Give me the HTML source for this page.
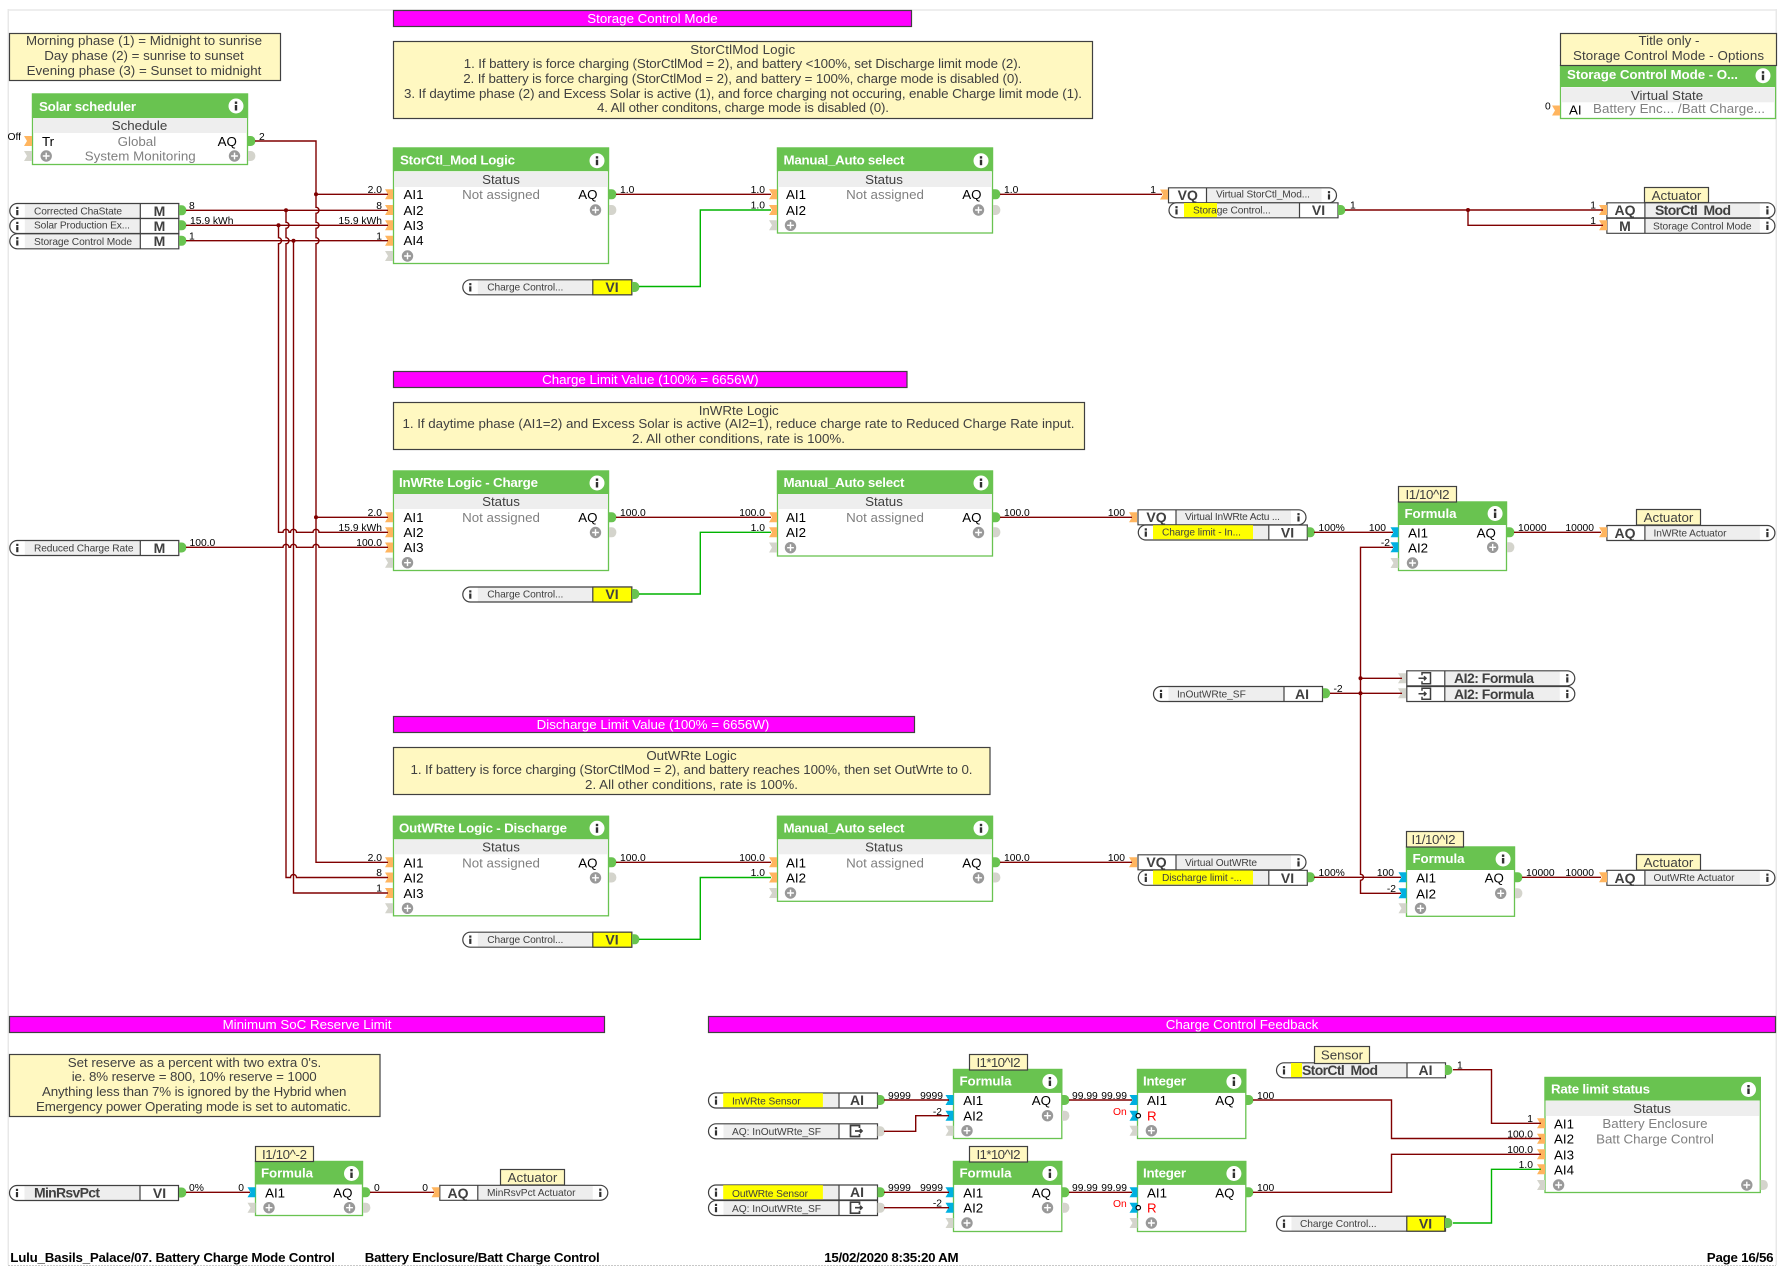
<!DOCTYPE html>
<html><head><meta charset="utf-8"><title>Battery Charge Mode Control</title>
<style>
html,body{margin:0;padding:0;background:#fff;width:1791px;height:1283px;overflow:hidden}
svg{display:block}
text{font-family:"Liberation Sans",Arial,sans-serif;white-space:pre}
.n{font-size:13.33px;fill:#404040;text-anchor:middle}
.mg{font-size:13.33px;fill:#fff;text-anchor:middle}
.h{font-size:13.33px;font-weight:bold;fill:#fff}
.t{font-size:13.33px;fill:#000}
.tr{font-size:13.33px;fill:#000;text-anchor:end}
.s{font-size:13.33px;fill:#808080;text-anchor:middle}
.st{font-size:13.33px;fill:#404040;text-anchor:middle}
.l{font-size:10.3px;fill:#000}
.lr{font-size:10.3px;fill:#000;text-anchor:end}
.m{font-size:10.2px;fill:#404040}
.b{font-size:14px;font-weight:bold;fill:#404040;text-anchor:middle}
.bl{font-size:14px;font-weight:bold;fill:#404040}
.f{font-size:13.33px;font-weight:bold;fill:#000}
.note{fill:#fff8c1;stroke:#404040;stroke-width:1.2}
.mag{fill:#f0f;stroke:#404040;stroke-width:1.2}
.box{fill:#fff;stroke:#69c350;stroke-width:1.3}
.hd{fill:#69c350}
.gr{fill:#eee}
.w{fill:none;stroke:#800000;stroke-width:1.4}
.wg{fill:none;stroke:#00b400;stroke-width:1.4}
.bd{fill:none;stroke:#404040;stroke-width:1.2}
.y{fill:#ff0}
.yb{fill:#ff0;stroke:#404040;stroke-width:1.2}
</style></head><body>
<svg xmlns="http://www.w3.org/2000/svg" width="1791" height="1283" viewBox="0 0 1791 1283">
<defs>
<g id="i"><rect x="-1.1" y="-4.2" width="2.2" height="2.2" fill="#303030"/><rect x="-1.1" y="-1" width="2.2" height="5.2" fill="#303030"/></g>
<g id="I"><circle r="7.5" fill="#fff"/><rect x="-1.2" y="-4.5" width="2.4" height="2.4" fill="#303030"/><rect x="-1.2" y="-1" width="2.4" height="5.5" fill="#303030"/></g>
<g id="P"><circle r="5.7" fill="#999"/><path d="M-3.4,0H3.4M0,-3.4V3.4" stroke="#fff" stroke-width="1.4"/></g>
<path id="pI" d="M-8,-5H0V5H-8L-5,0Z" fill="#ffb55f"/>
<path id="pB" d="M-8,-5H0V5H-8L-5,0Z" fill="#00b0e0"/>
<path id="pG" d="M-8,-5H0V5H-8L-5,0Z" fill="#d4d4cc"/>
<path id="pO" d="M0,-5H3A4.4,5 0 0 1 3,5H0Z" fill="#69c350"/>
<path id="pX" d="M0,-5H3A4.4,5 0 0 1 3,5H0Z" fill="#d4d4cc"/>
<g id="L"><path d="M8,.5H169.5V15.5H8A7.5,7.5 0 0 1 8,.5Z" fill="#fff"/><rect x="15.5" y="1" width="115.5" height="14" fill="#eee"/><path d="M8,.5H169.5V15.5H8A7.5,7.5 0 0 1 8,.5ZM131,.5V15.5" class="bd"/><use href="#i" x="8" y="8"/></g>
<g id="R"><path d="M.5,.5H161A7.5,7.5 0 0 1 161,15.5H.5Z" fill="#fff"/><rect x="39" y="1" width="114.5" height="14" fill="#eee"/><path d="M.5,.5H161A7.5,7.5 0 0 1 161,15.5H.5ZM38.5,.5V15.5" class="bd"/><use href="#i" x="161" y="8"/></g>
<path id="ao" d="M3.5,-3V-5.5H-5.5V5.5H3.5V3M-1,0H6M4,-2L6,0L4,2" fill="none" stroke="#404040" stroke-width="1.7"/>
<path id="ai" d="M-3,-3V-5.5H5.5V5.5H-3V3M-6.5,0H1M-1,-2L1,0L-1,2" fill="none" stroke="#404040" stroke-width="1.5"/>
</defs>

<!-- page frame -->
<rect x="8" y="9" width="1768" height="2" fill="#eee"/>
<rect x="7.5" y="9" width="1.5" height="1256" fill="#e8e8e8"/>
<rect x="1775.5" y="9" width="1.5" height="1256" fill="#e8e8e8"/>
<path d="M8,1265.5H1776" stroke="#c8c8c8" stroke-dasharray="2 1" fill="none"/>

<!-- section titles -->
<rect class="mag" x="393.5" y="10.5" width="518" height="16"/><text class="mg" x="652.5" y="23">Storage Control Mode</text>
<rect class="mag" x="393.5" y="371.5" width="513.5" height="16"/><text class="mg" x="650.3" y="384">Charge Limit Value (100% = 6656W)</text>
<rect class="mag" x="393.5" y="716.5" width="521" height="16"/><text class="mg" x="653" y="729">Discharge Limit Value (100% = 6656W)</text>
<rect class="mag" x="9.5" y="1016.5" width="595" height="16"/><text class="mg" x="307" y="1029">Minimum SoC Reserve Limit</text>
<rect class="mag" x="708.5" y="1016.5" width="1067" height="16"/><text class="mg" x="1242" y="1029">Charge Control Feedback</text>

<!-- notes -->
<rect class="note" x="9.5" y="33.5" width="271" height="47"/>
<text class="n" x="144" y="45" textLength="236">Morning phase (1) = Midnight to sunrise</text>
<text class="n" x="144" y="60" textLength="199.5">Day phase (2) = sunrise to sunset</text>
<text class="n" x="144" y="75" textLength="234.7">Evening phase (3) = Sunset to midnight</text>

<rect class="note" x="393.5" y="41.5" width="699" height="77"/>
<text class="n" x="742.7" y="54" textLength="105">StorCtlMod Logic</text>
<text class="n" x="742.5" y="68" textLength="557.5">1. If battery is force charging (StorCtlMod = 2), and battery &lt;100%, set Discharge limit mode (2).</text>
<text class="n" x="742.7" y="83" textLength="559">2. If battery is force charging (StorCtlMod = 2), and battery = 100%, charge mode is disabled (0).</text>
<text class="n" x="743" y="98" textLength="678">3. If daytime phase (2) and Excess Solar is active (1), and force charging not occuring, enable Charge limit mode (1).</text>
<text class="n" x="743" y="112" textLength="292">4. All other conditons, charge mode is disabled (0).</text>

<rect class="note" x="393.5" y="402.5" width="691" height="47"/>
<text class="n" x="738.7" y="415">InWRte Logic</text>
<text class="n" x="738.5" y="428" textLength="672">1. If daytime phase (AI1=2) and Excess Solar is active (AI2=1), reduce charge rate to Reduced Charge Rate input.</text>
<text class="n" x="738.5" y="443" textLength="213">2. All other conditions, rate is 100%.</text>

<rect class="note" x="393.5" y="747.5" width="596.5" height="47"/>
<text class="n" x="691.5" y="760">OutWRte Logic</text>
<text class="n" x="691.5" y="774" textLength="562">1. If battery is force charging (StorCtlMod = 2), and battery reaches 100%, then set OutWrte to 0.</text>
<text class="n" x="691.5" y="789" textLength="213">2. All other conditions, rate is 100%.</text>

<rect class="note" x="9.5" y="1054.5" width="370.5" height="62"/>
<text class="n" x="194.5" y="1067" textLength="253.5">Set reserve as a percent with two extra 0's.</text>
<text class="n" x="194.2" y="1081" textLength="245">ie. 8% reserve = 800, 10% reserve = 1000</text>
<text class="n" x="194.2" y="1096" textLength="304.5">Anything less than 7% is ignored by the Hybrid when</text>
<text class="n" x="193.5" y="1111" textLength="315">Emergency power Operating mode is set to automatic.</text>

<!-- top-right virtual state -->
<rect class="box" x="1560.5" y="65.5" width="215" height="53"/>
<rect class="hd" x="1560" y="65" width="216" height="22"/>
<rect class="gr" x="1561" y="87.3" width="214" height="15"/>
<rect class="note" x="1560.5" y="33.5" width="216" height="32"/>
<text class="n" x="1669" y="45">Title only -</text>
<text class="n" x="1668.5" y="60" textLength="191">Storage Control Mode - Options</text>
<text class="h" x="1567" y="79" textLength="171">Storage Control Mode - O...</text>
<use href="#I" x="1763" y="75.7"/>
<text class="st" x="1667" y="100">Virtual State</text>
<text class="t" x="1569" y="114.5">AI</text>
<text class="s" x="1679" y="113" textLength="172">Battery Enc... /Batt Charge...</text>
<use href="#pI" x="1560" y="110.5"/>
<text class="l" x="1545" y="109.5">0</text>

<!-- Solar scheduler -->
<g transform="translate(32.5,94)">
<rect class="box" width="215" height="70.5"/><rect class="hd" x="-.6" y="-.6" width="216.2" height="24.6"/><rect class="gr" x=".6" y="24" width="213.8" height="15"/>
<text class="h" x="6.5" y="17" textLength="97">Solar scheduler</text><use href="#I" x="203.5" y="12"/>
<text class="st" x="107" y="36">Schedule</text>
<text class="t" x="9.5" y="52">Tr</text><text class="s" x="104.4" y="52">Global</text><text class="tr" x="204.4" y="52">AQ</text>
<text class="s" x="107.7" y="66.7" textLength="111">System Monitoring</text><use href="#P" x="13.7" y="62"/><use href="#P" x="202" y="62"/>
</g>
<use href="#pI" x="32" y="141"/><use href="#pG" x="32" y="156"/><use href="#pO" x="248" y="141"/><use href="#pX" x="248" y="156"/>
<text class="l" x="7.5" y="140">Off</text><text class="l" x="259" y="140">2</text>

<!-- Left sensors -->
<use href="#L" x="9.3" y="203"/><text class="m" x="34" y="214.5" textLength="88">Corrected ChaState</text><text class="b" x="159.5" y="216">M</text>
<use href="#L" x="9.3" y="218"/><text class="m" x="34" y="228.5" textLength="96">Solar Production Ex...</text><text class="b" x="159.5" y="231">M</text>
<use href="#L" x="9.3" y="233.3"/><text class="m" x="34" y="245" textLength="98">Storage Control Mode</text><text class="b" x="159.5" y="246">M</text>
<use href="#pO" x="179" y="210.3"/><use href="#pO" x="179" y="225.3"/><use href="#pO" x="179" y="240.7"/>

<use href="#L" x="9.3" y="540"/><text class="m" x="34" y="551.5" textLength="99.5">Reduced Charge Rate</text><text class="b" x="159.5" y="553">M</text>
<use href="#pO" x="179" y="547.5"/>

<!-- StorCtl_Mod Logic -->
<g transform="translate(393.5,148)">
<rect class="box" width="215" height="115.5"/><rect class="hd" x="-.6" y="-.6" width="216.2" height="23.8"/><rect class="gr" x=".6" y="24" width="213.8" height="15"/>
<text class="h" x="6.5" y="16.7" textLength="115">StorCtl_Mod Logic</text><use href="#I" x="203.5" y="12.7"/>
<text class="st" x="107.5" y="36">Status</text>
<text class="t" x="10" y="51">AI1</text><text class="s" x="107.5" y="51">Not assigned</text><text class="tr" x="204" y="51">AQ</text>
<text class="t" x="10" y="67">AI2</text><text class="t" x="10" y="82">AI3</text><text class="t" x="10" y="97">AI4</text>
<use href="#P" x="202" y="62"/><use href="#P" x="14" y="108"/>
</g>
<use href="#pI" x="393" y="194.3"/><use href="#pI" x="393" y="210"/><use href="#pI" x="393" y="225.3"/><use href="#pI" x="393" y="240.7"/><use href="#pG" x="393" y="256"/>
<use href="#pO" x="609" y="194.3"/><use href="#pX" x="609" y="210"/>

<use href="#L" x="462.3" y="279.3"/><rect class="yb" x="592.8" y="279.8" width="39" height="15"/><text class="m" x="487.3" y="290.5" textLength="76">Charge Control...</text><text class="b" x="612" y="292">VI</text>
<use href="#pO" x="632" y="287"/>

<!-- Manual_Auto 1 -->
<g transform="translate(777.5,148)">
<rect class="box" width="215" height="85"/><rect class="hd" x="-.6" y="-.6" width="216.2" height="23.8"/><rect class="gr" x=".6" y="24" width="213.8" height="15"/>
<text class="h" x="6" y="16.7" textLength="121">Manual_Auto select</text><use href="#I" x="203.5" y="12.7"/>
<text class="st" x="106.5" y="36">Status</text>
<text class="t" x="8.5" y="51">AI1</text><text class="s" x="107.5" y="51">Not assigned</text><text class="tr" x="204" y="51">AQ</text>
<text class="t" x="8.5" y="67">AI2</text><use href="#P" x="201" y="62"/><use href="#P" x="13" y="77.3"/>
</g>
<use href="#pI" x="777" y="194.3"/><use href="#pI" x="777" y="210"/><use href="#pG" x="777" y="225.3"/><use href="#pO" x="993" y="194.3"/><use href="#pX" x="993" y="210"/>

<!-- VQ/VI 1 -->
<use href="#R" x="1168" y="187.3"/><text class="m" x="1216" y="197.5" textLength="94">Virtual StorCtl_Mod...</text><text class="b" x="1187.8" y="200">VQ</text>
<use href="#pI" x="1168" y="194.5"/>
<use href="#L" x="1168.5" y="202.3"/><rect class="y" x="1184" y="203" width="33" height="14"/><text class="m" x="1193" y="213.5" textLength="77.7">Storage Control...</text><text class="b" x="1318.5" y="215">VI</text>
<use href="#pO" x="1338" y="210"/>

<!-- Actuator 1 -->
<use href="#R" x="1606.4" y="202.3"/><text class="bl" x="1655" y="215" textLength="76">StorCtl  Mod</text><text class="b" x="1625" y="215">AQ</text>
<use href="#R" x="1606.4" y="217.8"/><text class="m" x="1653" y="229.5" textLength="98.5">Storage Control Mode</text><text class="b" x="1625" y="231">M</text>
<rect class="note" x="1644.5" y="187.5" width="64" height="15"/><text class="n" x="1676.5" y="200">Actuator</text>
<use href="#pI" x="1607" y="210"/><use href="#pI" x="1607" y="225.3"/>

<!-- InWRte Logic -->
<g transform="translate(393.5,471)">
<rect class="box" width="215" height="99.5"/><rect class="hd" x="-.6" y="-.6" width="216.2" height="23.6"/><rect class="gr" x=".6" y="23" width="213.8" height="15"/>
<text class="h" x="5.5" y="16" textLength="139">InWRte Logic - Charge</text><use href="#I" x="203.5" y="12"/>
<text class="st" x="107.5" y="35">Status</text>
<text class="t" x="10" y="51">AI1</text><text class="s" x="107.5" y="51">Not assigned</text><text class="tr" x="204" y="51">AQ</text>
<text class="t" x="10" y="66">AI2</text><text class="t" x="10" y="81">AI3</text>
<use href="#P" x="202" y="61.5"/><use href="#P" x="14" y="91.7"/>
</g>
<use href="#pI" x="393" y="517.3"/><use href="#pI" x="393" y="532.3"/><use href="#pI" x="393" y="547.5"/><use href="#pG" x="393" y="562.7"/>
<use href="#pO" x="609" y="517.3"/><use href="#pX" x="609" y="532.3"/>

<use href="#L" x="462.3" y="586.5"/><rect class="yb" x="592.8" y="587" width="39" height="15"/><text class="m" x="487.3" y="597.5" textLength="76">Charge Control...</text><text class="b" x="612" y="599">VI</text>
<use href="#pO" x="632" y="594"/>

<!-- Manual_Auto 2 -->
<g transform="translate(777.5,471)">
<rect class="box" width="215" height="85"/><rect class="hd" x="-.6" y="-.6" width="216.2" height="23.6"/><rect class="gr" x=".6" y="23" width="213.8" height="15"/>
<text class="h" x="6" y="16" textLength="121">Manual_Auto select</text><use href="#I" x="203.5" y="12"/>
<text class="st" x="106.5" y="35">Status</text>
<text class="t" x="8.5" y="51">AI1</text><text class="s" x="107.5" y="51">Not assigned</text><text class="tr" x="204" y="51">AQ</text>
<text class="t" x="8.5" y="66">AI2</text><use href="#P" x="201" y="61.5"/><use href="#P" x="13" y="76.7"/>
</g>
<use href="#pI" x="777" y="517.3"/><use href="#pI" x="777" y="532.3"/><use href="#pG" x="777" y="547.5"/><use href="#pO" x="993" y="517.3"/><use href="#pX" x="993" y="532.3"/>

<!-- VQ/VI 2 -->
<use href="#R" x="1137.5" y="509.3"/><text class="m" x="1185" y="520" textLength="95">Virtual InWRte Actu ...</text><text class="b" x="1156.5" y="522">VQ</text>
<use href="#pI" x="1137" y="517.3"/>
<use href="#L" x="1137.8" y="524.5"/><rect class="y" x="1153" y="525.2" width="100" height="14"/><text class="m" x="1162" y="535.5" textLength="79">Charge limit - In...</text><text class="b" x="1287.5" y="537.5">VI</text>
<use href="#pO" x="1307.5" y="532.3"/>

<!-- Formula 1 -->
<g transform="translate(1398.5,502)">
<rect class="box" width="108" height="68.5"/><rect class="hd" x="-.6" y="-.6" width="109.2" height="23.6"/>
<text class="h" x="6" y="16" textLength="52">Formula</text><use href="#I" x="96.6" y="11.5"/>
<text class="t" x="9.6" y="35.3">AI1</text><text class="tr" x="97.4" y="35.3">AQ</text><text class="t" x="9.6" y="50.3">AI2</text>
<use href="#P" x="94.2" y="45.3"/><use href="#P" x="14" y="61"/>
</g>
<rect class="note" x="1398.5" y="486.5" width="58" height="15.5"/><text class="n" x="1427.5" y="499" textLength="44">I1/10^I2</text>
<use href="#pB" x="1398.5" y="532.3"/><use href="#pB" x="1398.5" y="547.3"/><use href="#pG" x="1398.5" y="563"/><use href="#pO" x="1507" y="532.3"/><use href="#pX" x="1507" y="547.3"/>

<!-- Actuator 2 -->
<use href="#R" x="1606.4" y="525"/><text class="m" x="1653.5" y="536.5" textLength="73">InWRte Actuator</text><text class="b" x="1625" y="538">AQ</text>
<rect class="note" x="1636.5" y="509.5" width="64" height="15.5"/><text class="n" x="1668.5" y="522">Actuator</text>
<use href="#pI" x="1607" y="532.3"/>

<!-- AI2 refs & SF -->
<use href="#R" x="1406.3" y="670.3"/><text class="bl" x="1454" y="683" textLength="80">AI2: Formula</text><use href="#ai" x="1425" y="678.3"/>
<use href="#R" x="1406.3" y="686"/><text class="bl" x="1454" y="699" textLength="80">AI2: Formula</text><use href="#ai" x="1425" y="693.8"/>
<use href="#pG" x="1406" y="678.3"/><use href="#pG" x="1406" y="693.3"/>
<use href="#L" x="1153" y="686"/><text class="m" x="1177" y="697.5" textLength="68.8">InOutWRte_SF</text><text class="b" x="1302" y="699">AI</text>
<use href="#pO" x="1322.8" y="693.3"/>

<!-- OutWRte Logic -->
<g transform="translate(393.5,816.3)">
<rect class="box" width="215" height="99.5"/><rect class="hd" x="-.6" y="-.6" width="216.2" height="23.6"/><rect class="gr" x=".6" y="23" width="213.8" height="15"/>
<text class="h" x="5.5" y="16" textLength="168">OutWRte Logic - Discharge</text><use href="#I" x="203.5" y="12"/>
<text class="st" x="107.5" y="35">Status</text>
<text class="t" x="10" y="51">AI1</text><text class="s" x="107.5" y="51">Not assigned</text><text class="tr" x="204" y="51">AQ</text>
<text class="t" x="10" y="66">AI2</text><text class="t" x="10" y="81.5">AI3</text>
<use href="#P" x="202" y="61.5"/><use href="#P" x="14" y="92"/>
</g>
<use href="#pI" x="393" y="862.3"/><use href="#pI" x="393" y="877.5"/><use href="#pI" x="393" y="893"/><use href="#pG" x="393" y="908.3"/>
<use href="#pO" x="609" y="862.3"/><use href="#pX" x="609" y="877.5"/>

<use href="#L" x="462.3" y="931.7"/><rect class="yb" x="592.8" y="932.2" width="39" height="15"/><text class="m" x="487.3" y="943" textLength="76">Charge Control...</text><text class="b" x="612" y="944.5">VI</text>
<use href="#pO" x="632" y="939.3"/>

<!-- Manual_Auto 3 -->
<g transform="translate(777.5,816.3)">
<rect class="box" width="215" height="85"/><rect class="hd" x="-.6" y="-.6" width="216.2" height="23.6"/><rect class="gr" x=".6" y="23" width="213.8" height="15"/>
<text class="h" x="6" y="16" textLength="121">Manual_Auto select</text><use href="#I" x="203.5" y="12"/>
<text class="st" x="106.5" y="35">Status</text>
<text class="t" x="8.5" y="51">AI1</text><text class="s" x="107.5" y="51">Not assigned</text><text class="tr" x="204" y="51">AQ</text>
<text class="t" x="8.5" y="66">AI2</text><use href="#P" x="201" y="61.5"/><use href="#P" x="13" y="76.7"/>
</g>
<use href="#pI" x="777" y="862.3"/><use href="#pI" x="777" y="877.5"/><use href="#pG" x="777" y="893"/><use href="#pO" x="993" y="862.3"/><use href="#pX" x="993" y="877.5"/>

<!-- VQ/VI 3 -->
<use href="#R" x="1137.5" y="854.3"/><text class="m" x="1185" y="866" textLength="72">Virtual OutWRte</text><text class="b" x="1156.5" y="867">VQ</text>
<use href="#pI" x="1137" y="862.3"/>
<use href="#L" x="1137.8" y="869.8"/><rect class="y" x="1153" y="870.5" width="100" height="14"/><text class="m" x="1162" y="881" textLength="80">Discharge limit -...</text><text class="b" x="1287.5" y="883">VI</text>
<use href="#pO" x="1307.5" y="877.3"/>

<!-- Formula 2 -->
<g transform="translate(1406.5,847)">
<rect class="box" width="108" height="69.3"/><rect class="hd" x="-.6" y="-.6" width="109.2" height="23.6"/>
<text class="h" x="6" y="16" textLength="52">Formula</text><use href="#I" x="96.6" y="12"/>
<text class="t" x="9.6" y="35.3">AI1</text><text class="tr" x="97.4" y="35.3">AQ</text><text class="t" x="9.6" y="51.3">AI2</text>
<use href="#P" x="94.2" y="46.3"/><use href="#P" x="14" y="61.3"/>
</g>
<rect class="note" x="1406.5" y="831.5" width="57" height="15.5"/><text class="n" x="1433.5" y="844" textLength="44">I1/10^I2</text>
<use href="#pB" x="1406.5" y="877.3"/><use href="#pB" x="1406.5" y="893.3"/><use href="#pG" x="1406.5" y="908.3"/><use href="#pO" x="1515" y="877.3"/><use href="#pX" x="1515" y="893.3"/>

<!-- Actuator 3 -->
<use href="#R" x="1606.4" y="869.8"/><text class="m" x="1653.5" y="881" textLength="81">OutWRte Actuator</text><text class="b" x="1625" y="883">AQ</text>
<rect class="note" x="1636.5" y="854.5" width="64" height="15.5"/><text class="n" x="1668.5" y="867">Actuator</text>
<use href="#pI" x="1607" y="877.3"/>

<!-- Min reserve -->
<use href="#L" x="9" y="1185"/><text class="bl" x="34" y="1197.5" textLength="66">MinRsvPct</text><text class="b" x="159.5" y="1198">VI</text>
<use href="#pO" x="179" y="1192.5"/>
<g transform="translate(255.5,1161.5)">
<rect class="box" width="107" height="54"/><rect class="hd" x="-.6" y="-.6" width="108.2" height="23.6"/>
<text class="h" x="5.5" y="16" textLength="52">Formula</text><use href="#I" x="96" y="12"/>
<text class="t" x="9.6" y="35.8">AI1</text><text class="tr" x="97" y="35.8">AQ</text>
<use href="#P" x="13.5" y="46.2"/><use href="#P" x="94" y="46.2"/>
</g>
<rect class="note" x="255.5" y="1146.5" width="58" height="15"/><text class="n" x="284.5" y="1159" textLength="45">I1/10^-2</text>
<use href="#pB" x="255.5" y="1192.3"/><use href="#pG" x="255.5" y="1207.7"/><use href="#pO" x="363" y="1192.3"/><use href="#pX" x="363" y="1207.7"/>
<use href="#R" x="439.3" y="1184.8"/><text class="m" x="487" y="1196" textLength="88.5">MinRsvPct Actuator</text><text class="b" x="458" y="1198">AQ</text>
<rect class="note" x="500.5" y="1169.5" width="64" height="15.5"/><text class="n" x="532.5" y="1182">Actuator</text>
<use href="#pI" x="439.5" y="1192.3"/>

<!-- Feedback sensors -->
<use href="#L" x="708" y="1092.5"/><rect class="y" x="723.2" y="1093.2" width="99.7" height="14"/><text class="m" x="732" y="1104.5" textLength="68.6">InWRte Sensor</text><text class="b" x="857" y="1105">AI</text><use href="#pO" x="877.5" y="1100"/>
<use href="#L" x="708" y="1123.3"/><text class="m" x="732" y="1135" textLength="89">AQ: InOutWRte_SF</text><use href="#ao" x="856" y="1131"/><use href="#pX" x="877.5" y="1131.3"/>
<use href="#L" x="708" y="1184.5"/><rect class="y" x="723.2" y="1185.2" width="99.7" height="14"/><text class="m" x="732" y="1197" textLength="76">OutWRte Sensor</text><text class="b" x="857" y="1197">AI</text><use href="#pO" x="877.5" y="1192.3"/>
<use href="#L" x="708" y="1200"/><text class="m" x="732" y="1212" textLength="89">AQ: InOutWRte_SF</text><use href="#ao" x="856" y="1207.7"/><use href="#pX" x="877.5" y="1207.7"/>

<!-- Feedback formula 1 -->
<g transform="translate(953.5,1069.5)">
<rect class="box" width="108.3" height="69"/><rect class="hd" x="-.6" y="-.6" width="109.5" height="24"/>
<text class="h" x="6" y="16" textLength="52">Formula</text><use href="#I" x="96.4" y="12"/>
<text class="t" x="9.7" y="35.3">AI1</text><text class="tr" x="97.5" y="35.3">AQ</text><text class="t" x="9.7" y="51">AI2</text>
<use href="#P" x="94" y="46.2"/><use href="#P" x="13.5" y="61.2"/>
</g>
<rect class="note" x="969.5" y="1054.5" width="58" height="15.5"/><text class="n" x="998.5" y="1067" textLength="44">I1*10^I2</text>
<use href="#pB" x="953.5" y="1100"/><use href="#pB" x="953.5" y="1115.7"/><use href="#pG" x="953.5" y="1130.7"/><use href="#pO" x="1062" y="1100"/><use href="#pX" x="1062" y="1115.7"/>

<!-- Integer 1 -->
<g transform="translate(1137.5,1069.5)">
<rect class="box" width="108.3" height="69"/><rect class="hd" x="-.6" y="-.6" width="109.5" height="24"/>
<text class="h" x="5.5" y="16" textLength="43">Integer</text><use href="#I" x="96.4" y="12"/>
<text class="t" x="9.5" y="35.3">AI1</text><text class="tr" x="97" y="35.3">AQ</text><text class="t" x="9.5" y="51" style="fill:#f00">R</text>
<use href="#P" x="13.9" y="61.2"/>
</g>
<use href="#pB" x="1137.5" y="1100"/><use href="#pB" x="1137.5" y="1115.7"/><circle cx="1138.3" cy="1115.7" r="2.2" fill="#fff" stroke="#000" stroke-width="1.2"/><use href="#pG" x="1137.5" y="1130.7"/><use href="#pO" x="1246" y="1100"/>
<text class="l" x="1113" y="1115" style="fill:#f00">On</text>

<!-- Feedback formula 2 -->
<g transform="translate(953.5,1161.5)">
<rect class="box" width="108.3" height="70"/><rect class="hd" x="-.6" y="-.6" width="109.5" height="24"/>
<text class="h" x="6" y="16" textLength="52">Formula</text><use href="#I" x="96.4" y="12"/>
<text class="t" x="9.7" y="35.8">AI1</text><text class="tr" x="97.5" y="35.8">AQ</text><text class="t" x="9.7" y="51">AI2</text>
<use href="#P" x="94" y="46.2"/><use href="#P" x="13.5" y="61.5"/>
</g>
<rect class="note" x="969.5" y="1146.5" width="58" height="15.5"/><text class="n" x="998.5" y="1159" textLength="44">I1*10^I2</text>
<use href="#pB" x="953.5" y="1192.3"/><use href="#pB" x="953.5" y="1207.7"/><use href="#pG" x="953.5" y="1223"/><use href="#pO" x="1062" y="1192.3"/><use href="#pX" x="1062" y="1207.7"/>

<!-- Integer 2 -->
<g transform="translate(1137.5,1161.5)">
<rect class="box" width="108.3" height="70"/><rect class="hd" x="-.6" y="-.6" width="109.5" height="24"/>
<text class="h" x="5.5" y="16" textLength="43">Integer</text><use href="#I" x="96.4" y="12"/>
<text class="t" x="9.5" y="35.8">AI1</text><text class="tr" x="97" y="35.8">AQ</text><text class="t" x="9.5" y="51" style="fill:#f00">R</text>
<use href="#P" x="13.9" y="61.5"/>
</g>
<use href="#pB" x="1137.5" y="1192.3"/><use href="#pB" x="1137.5" y="1207.7"/><circle cx="1138.3" cy="1207.7" r="2.2" fill="#fff" stroke="#000" stroke-width="1.2"/><use href="#pG" x="1137.5" y="1223"/><use href="#pO" x="1246" y="1192.3"/>
<text class="l" x="1113" y="1207" style="fill:#f00">On</text>

<!-- StorCtl sensor and Charge control -->
<use href="#L" x="1276" y="1062.3"/><rect class="y" x="1291" y="1063" width="11" height="14"/><text class="bl" x="1302" y="1075" textLength="76">StorCtl  Mod</text><text class="b" x="1425.5" y="1075">AI</text>
<use href="#pO" x="1445" y="1070"/>
<rect class="note" x="1314.5" y="1046.5" width="55" height="17"/><text class="n" x="1342" y="1059.5">Sensor</text>
<use href="#L" x="1276" y="1215.7"/><rect class="yb" x="1406.8" y="1216.2" width="38" height="15"/><text class="m" x="1300" y="1227" textLength="76.6">Charge Control...</text><text class="b" x="1425.5" y="1228.5">VI</text>
<use href="#pO" x="1445" y="1223"/>

<!-- Rate limit status -->
<g transform="translate(1545,1077.5)">
<rect class="box" width="215.3" height="115"/><rect class="hd" x="-.6" y="-.6" width="216.5" height="23.6"/><rect class="gr" x=".6" y="23.2" width="214" height="15.3"/>
<text class="h" x="6" y="16" textLength="99">Rate limit status</text><use href="#I" x="203.5" y="12"/>
<text class="st" x="107" y="35.5">Status</text>
<text class="t" x="9" y="50.8">AI1</text><text class="s" x="110" y="50.5">Battery Enclosure</text>
<text class="t" x="9" y="66.2">AI2</text><text class="s" x="110" y="66">Batt Charge Control</text>
<text class="t" x="9" y="81.8">AI3</text><text class="t" x="9" y="96.8">AI4</text>
<use href="#P" x="13.6" y="107.5"/><use href="#P" x="201.8" y="107.5"/>
</g>
<use href="#pI" x="1545" y="1123.3"/><use href="#pI" x="1545" y="1138.7"/><use href="#pI" x="1545" y="1154.3"/><use href="#pI" x="1545" y="1169.3"/><use href="#pG" x="1545" y="1185"/><use href="#pX" x="1760.5" y="1185"/>

<!-- wires -->
<path class="w" d="M255,141H316V207.3a3,3 0 0 1 0,6V222.3a3,3 0 0 1 0,6V237.7a3,3 0 0 1 0,6V862.3H388M316,194.3H388M316,517.3H388"/>
<path class="w" d="M186,210.3H388M186,225.3H388M186,240.7H388"/>
<path class="w" d="M286,210.3V222.3a3,3 0 0 1 0,6V237.7a3,3 0 0 1 0,6V877.5H290.5a3,3 0 0 1 6,0H388"/>
<path class="w" d="M278.5,225.3V237.7a3,3 0 0 1 0,6V532.3H283a3,3 0 0 1 6,0H290.5a3,3 0 0 1 6,0H313a3,3 0 0 1 6,0H388"/>
<path class="w" d="M293.5,240.7V893H388"/>
<path class="w" d="M186,547.3H283a3,3 0 0 1 6,0H290.5a3,3 0 0 1 6,0H313a3,3 0 0 1 6,0H388"/>
<path class="w" d="M616,194.3H771M1000,194.3H1162M1345,210H1603M1468,210V225.3H1603"/>
<path class="w" d="M616,517.3H771M1000,517.3H1132M1314,532.3H1393M1514,532.3H1601"/>
<path class="w" d="M1393,547.3H1360.5V874.3a3,3 0 0 1 0,6V893.3H1401M1360.5,678.3H1402M1330,693.3H1402"/>
<path class="w" d="M616,862.3H771M1000,862.3H1132M1314,877.3H1401M1522,877.3H1601"/>
<path class="w" d="M186,1192.3H250M370,1192.3H434"/>
<path class="w" d="M884,1100H949M884,1131.3H915.7V1115.7H949M1069,1100H1132M1253,1100H1391.5V1138.5H1541"/>
<path class="w" d="M884,1192.3H949M884,1207.7H949M1069,1192.3H1132M1253,1192.3H1391.5V1154.3H1541M1453,1069.7H1491.5V1123.3H1541"/>
<path class="wg" d="M639,286.5H700.3V210H771M639,594H700.3V532.3H771M639,939.3H700.3V877.5H771M1453,1223H1491.5V1169.3H1541"/>
<g fill="#800000"><circle cx="316" cy="194.3" r="2"/><circle cx="286" cy="210.3" r="2"/><circle cx="278.5" cy="225.3" r="2"/><circle cx="293.5" cy="240.7" r="2"/><circle cx="316" cy="517.3" r="2"/><circle cx="1468" cy="210" r="2"/><circle cx="1360.5" cy="678.3" r="2"/><circle cx="1360.5" cy="693.3" r="2"/></g>

<!-- wire labels -->
<text class="l" x="189" y="209">8</text><text class="l" x="190" y="224">15.9 kWh</text><text class="l" x="189" y="239.5">1</text>
<text class="lr" x="382" y="193">2.0</text><text class="lr" x="382" y="209">8</text><text class="lr" x="382" y="224">15.9 kWh</text><text class="lr" x="382" y="239.5">1</text>
<text class="l" x="620" y="193">1.0</text><text class="lr" x="765" y="193">1.0</text><text class="lr" x="765" y="208.5">1.0</text><text class="l" x="1004" y="193">1.0</text><text class="lr" x="1156" y="193">1</text>
<text class="l" x="1350" y="208.5">1</text><text class="lr" x="1596" y="208.5">1</text><text class="lr" x="1596" y="224">1</text>

<text class="l" x="189.5" y="546">100.0</text>
<text class="lr" x="382" y="516">2.0</text><text class="lr" x="382" y="531">15.9 kWh</text><text class="lr" x="382" y="546">100.0</text>
<text class="l" x="620" y="516">100.0</text><text class="lr" x="765" y="516">100.0</text><text class="lr" x="765" y="531">1.0</text><text class="l" x="1004" y="516">100.0</text><text class="lr" x="1125" y="516">100</text>
<text class="l" x="1318.5" y="531">100%</text><text class="lr" x="1386" y="531">100</text><text class="lr" x="1390" y="546">-2</text>
<text class="l" x="1518" y="531">10000</text><text class="lr" x="1594" y="531">10000</text>
<text class="l" x="1333.5" y="692">-2</text>

<text class="lr" x="382" y="861">2.0</text><text class="lr" x="382" y="876">8</text><text class="lr" x="382" y="891.7">1</text>
<text class="l" x="620" y="861">100.0</text><text class="lr" x="765" y="861">100.0</text><text class="lr" x="765" y="876">1.0</text><text class="l" x="1004" y="861">100.0</text><text class="lr" x="1125" y="861">100</text>
<text class="l" x="1318.5" y="876">100%</text><text class="lr" x="1394" y="876">100</text><text class="lr" x="1396" y="892">-2</text>
<text class="l" x="1526" y="876">10000</text><text class="lr" x="1594" y="876">10000</text>

<text class="l" x="189" y="1191">0%</text><text class="lr" x="244" y="1191">0</text><text class="l" x="374" y="1191">0</text><text class="lr" x="428" y="1191">0</text>

<text class="l" x="888" y="1099">9999</text><text class="lr" x="943" y="1099">9999</text><text class="lr" x="942" y="1115">-2</text>
<text class="l" x="1072" y="1099">99.99</text><text class="lr" x="1127" y="1099">99.99</text><text class="l" x="1257" y="1099">100</text>
<text class="l" x="888" y="1191">9999</text><text class="lr" x="943" y="1191">9999</text><text class="lr" x="942" y="1206.5">-2</text>
<text class="l" x="1072" y="1191">99.99</text><text class="lr" x="1127" y="1191">99.99</text><text class="l" x="1257" y="1191">100</text>
<text class="l" x="1457" y="1068.5">1</text><text class="lr" x="1533" y="1122">1</text><text class="lr" x="1533" y="1137.5">100.0</text><text class="lr" x="1533" y="1153">100.0</text><text class="lr" x="1533" y="1168">1.0</text>

<!-- footer -->
<text class="f" x="10.3" y="1262" textLength="324.5">Lulu_Basils_Palace/07. Battery Charge Mode Control</text>
<text class="f" x="364.7" y="1262" textLength="235">Battery Enclosure/Batt Charge Control</text>
<text class="f" x="824.3" y="1262" textLength="134.3">15/02/2020 8:35:20 AM</text>
<text class="f" x="1706.8" y="1262" textLength="66.8">Page 16/56</text>
</svg>
</body></html>
